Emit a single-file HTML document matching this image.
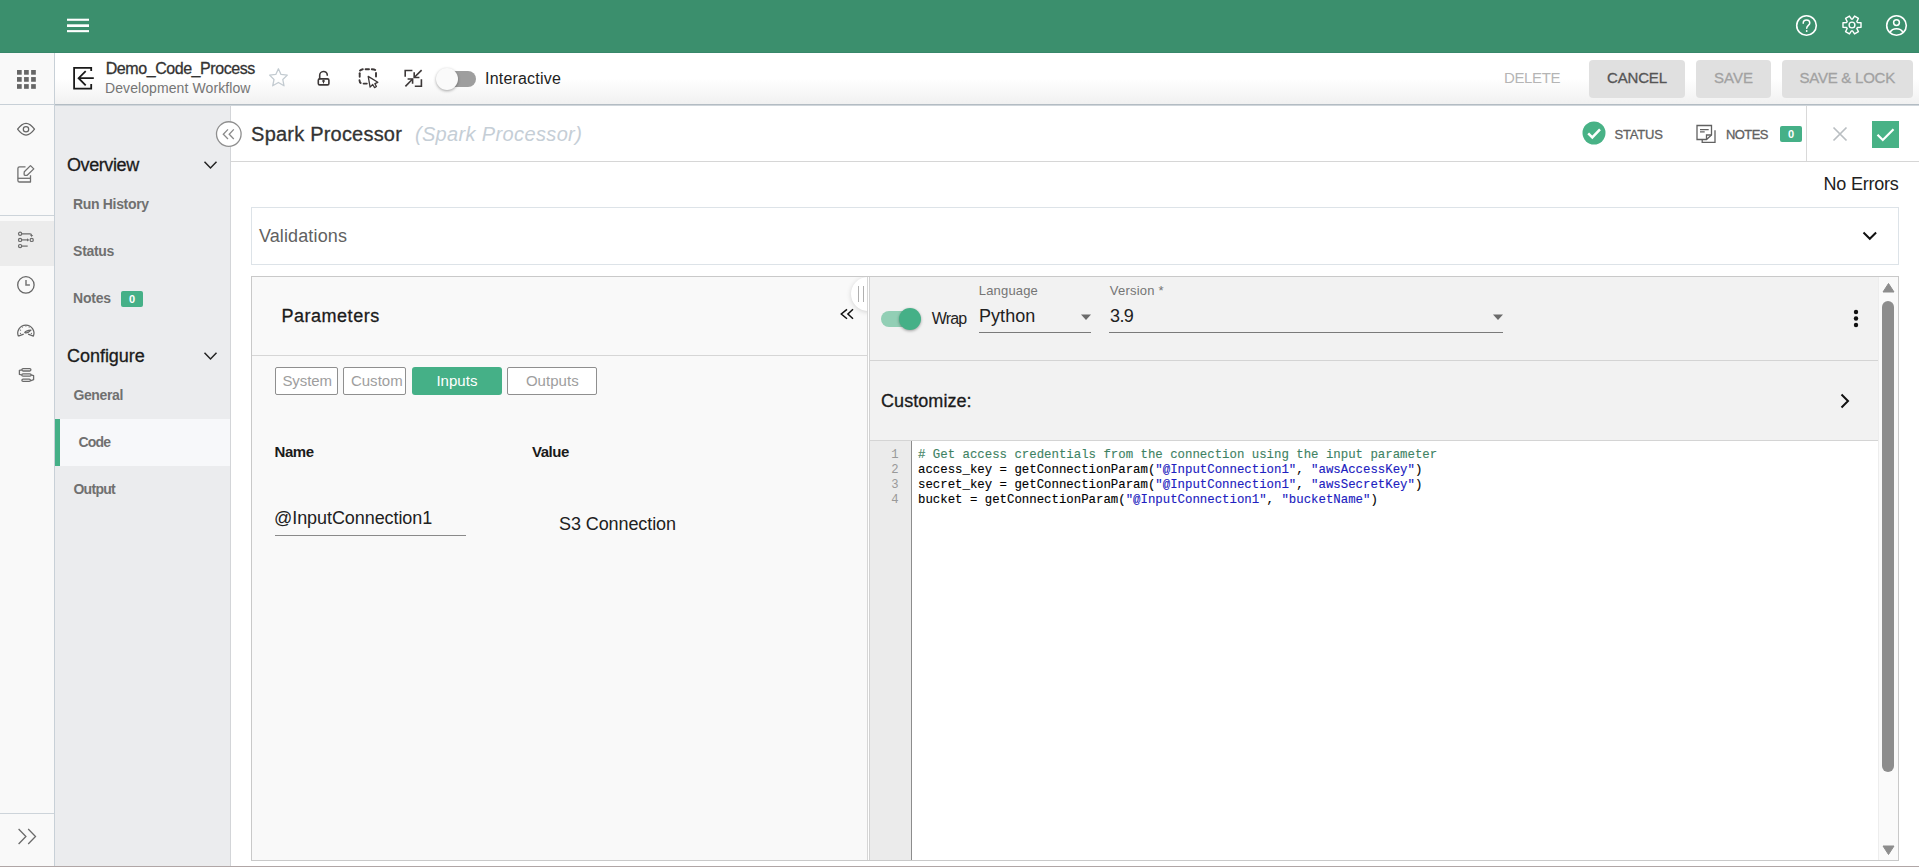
<!DOCTYPE html>
<html><head><meta charset="utf-8">
<style>
*{box-sizing:border-box;margin:0;padding:0}
html,body{width:1919px;height:867px;overflow:hidden;background:#fff;font-family:"Liberation Sans",sans-serif;color:#212121}
.abs{position:absolute}
#hdr{left:0;top:0;width:1919px;height:53px;background:#3b8f6d;border-bottom:1px solid #37876a}
#rail{left:0;top:53px;width:55px;height:814px;background:#f9f9f9;border-right:1px solid #c8d0d7}
#tb{left:55px;top:53px;width:1864px;height:52px;background:linear-gradient(#fff 0,#fff 50%,#f1f1f1 100%);border-bottom:1px solid #b3bcc3}
#tbl{left:55px;top:105px;width:1864px;height:1px;background:#d0d6db}
#side{left:55px;top:106px;width:176px;height:761px;background:#ebecee;border-right:1px solid #d3d5d8}
#main{left:231px;top:106px;width:1688px;height:761px;background:#fff}
svg{display:block}
.t{position:absolute;white-space:nowrap;line-height:1}
.m{-webkit-text-stroke:0.3px currentColor}
.cl{position:absolute;left:918px;font-family:'Liberation Mono',monospace;font-size:12.37px;line-height:15px;height:15px;color:#000;white-space:pre;transform:scaleY(1.1);transform-origin:0 72%;-webkit-text-stroke:0.12px currentColor}
</style></head><body>
<!-- header -->
<div id="hdr" class="abs">
  <svg class="abs" style="left:66px;top:16px" width="24" height="20" viewBox="0 0 24 20" fill="#fff"><rect x="1" y="2.7" width="22" height="2.1"/><rect x="1" y="8.3" width="22" height="2.7"/><rect x="1" y="14.1" width="22" height="2.1"/></svg>
  <svg class="abs" style="left:1795px;top:14px" width="23" height="23" viewBox="0 0 23 23"><circle cx="11.5" cy="11.5" r="9.8" fill="none" stroke="#fff" stroke-width="1.6"/><path d="M8.2 9.2c0-2 1.5-3.3 3.3-3.3s3.3 1.3 3.3 3.1c0 2.3-3.1 2.6-3.1 5.2" fill="none" stroke="#fff" stroke-width="1.5" stroke-linecap="round"/><circle cx="11.7" cy="17" r="0.9" fill="#fff"/></svg>
  <svg class="abs" style="left:1839.9px;top:13.4px" width="24" height="24" viewBox="0 0 24 24"><path d="M17.35 9.51L21.02 9.75L21.02 14.25L17.35 14.49L16.83 15.38L18.46 18.69L14.56 20.94L12.51 17.88L11.49 17.88L9.44 20.94L5.54 18.69L7.17 15.38L6.65 14.49L2.98 14.25L2.98 9.75L6.65 9.51L7.17 8.62L5.54 5.31L9.44 3.06L11.49 6.12L12.51 6.12L14.56 3.06L18.46 5.31L16.83 8.62Z" fill="none" stroke="#fff" stroke-width="1.4" stroke-linejoin="round"/><circle cx="12" cy="12" r="2.9" fill="none" stroke="#fff" stroke-width="1.4"/></svg>
  <svg class="abs" style="left:1885px;top:14px" width="23" height="23" viewBox="0 0 23 23"><circle cx="11.5" cy="11.5" r="9.8" fill="none" stroke="#fff" stroke-width="1.6"/><circle cx="11.5" cy="8.6" r="2.9" fill="none" stroke="#fff" stroke-width="1.5"/><path d="M4.9 18.6c1.3-2.4 3.8-3.8 6.6-3.8s5.3 1.4 6.6 3.8" fill="none" stroke="#fff" stroke-width="1.5"/></svg>
</div>
<!-- rail -->
<div id="rail" class="abs"></div>
<div class="abs" style="left:0;top:104px;width:54px;height:1px;background:#c8d0d7"></div>
<div class="abs" style="left:0;top:215px;width:54px;height:1px;background:#cdd4da"></div>
<div class="abs" style="left:0;top:221px;width:54px;height:45px;background:#ececec"></div>
<div class="abs" style="left:0;top:813px;width:54px;height:1px;background:#cdd4da"></div>
<svg class="abs" style="left:10px;top:113px" width="32" height="32" viewBox="0 0 32 32"><path d="M7.6 16.2Q16 4.4 24.5 16.2Q16 28 7.6 16.2Z" fill="none" stroke="#666" stroke-width="1.25" stroke-linejoin="round"/><circle cx="16" cy="16.2" r="2.7" fill="none" stroke="#666" stroke-width="1.25"/></svg>
<svg class="abs" style="left:10px;top:158px" width="32" height="32" viewBox="0 0 32 32"><g fill="none" stroke="#707070" stroke-width="1.3" stroke-linejoin="round"><path d="M15.5 8.9H9.6Q7.9 8.9 7.9 10.6V22.4Q7.9 24 9.6 24H20.5V17.3"/><path d="M7.9 20.3H20.5"/><path d="M20.5 7.6L23.8 10.9L17.2 17.3Q15.8 17.5 14.3 17.2Q13.9 15.6 14.3 13.8Z"/></g></svg>
<svg class="abs" style="left:10px;top:224px" width="32" height="32" viewBox="0 0 32 32"><g fill="none" stroke="#6b6b6b" stroke-width="1.2"><circle cx="10.1" cy="9.8" r="1.6"/><circle cx="10.1" cy="15.9" r="1.6"/><circle cx="10.1" cy="22.1" r="1.6"/><circle cx="21.7" cy="15.9" r="1.6"/><path d="M11.7 9.8H20Q21.5 9.8 21.5 11"/><path d="M11.7 15.9H17.5"/><path d="M11.7 22.1H17.7"/></g><path d="M20 11L23.2 11L21.6 12.9Z" fill="#6b6b6b"/><path d="M17 14.2L19.4 15.9L17 17.6Z" fill="#6b6b6b"/></svg>
<svg class="abs" style="left:10px;top:269px" width="32" height="32" viewBox="0 0 32 32"><circle cx="15.9" cy="15.9" r="8.2" fill="none" stroke="#666" stroke-width="1.3"/><path d="M16 11.1V15.9H19.9" fill="none" stroke="#777" stroke-width="1.5"/></svg>
<svg class="abs" style="left:10px;top:314px" width="32" height="32" viewBox="0 0 32 32"><g fill="none" stroke="#666" stroke-width="1.25" stroke-linejoin="round"><path d="M8.3 22.1A8.1 8.1 0 1 1 23.4 22.1L18.1 20.1M13.7 20.1L8.3 22.1"/><path d="M14.8 18.6Q15.6 16.6 21 16.2Q18.2 19.4 14.8 18.6Z"/></g><g fill="#777"><circle cx="10.5" cy="16.2" r=".65"/><circle cx="12.4" cy="13.1" r=".65"/><circle cx="15.9" cy="12" r=".65"/><circle cx="19.2" cy="13.1" r=".65"/><circle cx="10.5" cy="19.4" r=".65"/><circle cx="21.4" cy="19.4" r=".65"/></g></svg>
<svg class="abs" style="left:10px;top:359px" width="32" height="32" viewBox="0 0 32 32"><g fill="none" stroke="#6b6b6b" stroke-width="1.3" stroke-linejoin="round"><rect x="11.9" y="9.7" width="9" height="2.3" rx="1.15"/><rect x="11.8" y="14.9" width="9.3" height="2.3" rx="1.15"/><rect x="11.9" y="20.1" width="8.5" height="2.3" rx="1.15"/><path d="M11.9 10.8L9.4 11.3V15.3L11.8 16"/><path d="M21.1 15.8L23.6 16.7V20.6L20.4 21.8"/></g></svg>
<svg class="abs" style="left:10px;top:820px" width="32" height="32" viewBox="0 0 32 32"><path d="M8.6 9L15.9 16.5L8.6 24M18.2 9L25.5 16.5L18.2 24" fill="none" stroke="#6b6b6b" stroke-width="1.3"/></svg>
<!-- toolbar -->
<div id="tb" class="abs"></div>
<div id="tbl" class="abs"></div>
<svg class="abs" style="left:17px;top:70px" width="20" height="20" viewBox="0 0 20 20" fill="#666"><rect x="0.00" y="0.00" width="4.7" height="4.7"/><rect x="7.06" y="0.00" width="4.7" height="4.7"/><rect x="14.12" y="0.00" width="4.7" height="4.7"/><rect x="0.00" y="7.06" width="4.7" height="4.7"/><rect x="7.06" y="7.06" width="4.7" height="4.7"/><rect x="14.12" y="7.06" width="4.7" height="4.7"/><rect x="0.00" y="14.12" width="4.7" height="4.7"/><rect x="7.06" y="14.12" width="4.7" height="4.7"/><rect x="14.12" y="14.12" width="4.7" height="4.7"/></svg>
<svg class="abs" style="left:68px;top:62px" width="32" height="32" viewBox="0 0 32 32"><path d="M23.2 9V5.8H6.1V26.7H23.2V22.1" fill="none" stroke="#1a1a1a" stroke-width="1.8"/><path d="M25.8 16.2H10.8M17.7 9.2L10.6 16.2L17.7 23.4" fill="none" stroke="#1a1a1a" stroke-width="1.8"/></svg>
<div class="t m" style="left:105.75px;top:61.00px;font-size:16px;color:#333;letter-spacing:-0.44px">Demo_Code_Process</div>
<div class="t" style="left:105.00px;top:81.00px;font-size:14px;color:#757575;letter-spacing:0.09px">Development Workflow</div>
<svg class="abs" style="left:262px;top:62px" width="32" height="32" viewBox="0 0 32 32"><path d="M16.4 6.8L19 12.4L25.3 13.1L20.8 17.5L22 23.8L16.4 20.5L10.7 23.8L12 17.5L7.6 13.1L13.8 12.4Z" fill="none" stroke="#c3cbd1" stroke-width="1.3" stroke-linejoin="round"/></svg>
<svg class="abs" style="left:307px;top:62px" width="32" height="32" viewBox="0 0 32 32"><path d="M12.7 16.6V13.4A3.8 3.8 0 0 1 20.3 13.1" fill="none" stroke="#3d3838" stroke-width="1.6" stroke-linecap="round"/><rect x="11.3" y="16.9" width="10.6" height="6" rx="1.4" fill="none" stroke="#3d3838" stroke-width="1.6"/><circle cx="16.5" cy="19.1" r="1.25" fill="#3d3838"/><path d="M16.5 19.1V21.4" stroke="#3d3838" stroke-width="1.1"/></svg>
<svg class="abs" style="left:352px;top:62px" width="32" height="32" viewBox="0 0 32 32"><g fill="none" stroke="#3d3838" stroke-width="1.9" stroke-linecap="round"><path d="M8 8.6Q8.8 7.5 10.8 7.2"/><path d="M13.6 7.2H17"/><path d="M19.8 7.2Q22.4 7.4 23.2 8"/><path d="M7.7 11.3V14.8"/><path d="M24 10.9V14.5"/><path d="M7.5 18.3Q7.7 20.3 8.7 21"/><path d="M11.6 21.6H14.8"/></g><path d="M16.2 14.4L18.1 25.1L20.7 22.5L22.6 25.6L24.4 24.5L22.9 21.6L25.8 20.3Z" fill="#fff" stroke="#3d3838" stroke-width="1.3" stroke-linejoin="round"/></svg>
<svg class="abs" style="left:398px;top:62px" width="32" height="32" viewBox="0 0 32 32"><g fill="none" stroke="#3d3838" stroke-width="1.6"><path d="M14.4 8.5H7.2V14.8"/><path d="M23.6 8.1L16.2 15.5"/><path d="M16.2 10.3V15.5H21.4"/><path d="M7.4 24.4L14.6 17"/><path d="M9.6 17H14.6V21.8"/><path d="M23.4 17.3V24.2H16.8"/></g></svg>
<div class="abs" style="left:446px;top:71px;width:30px;height:16px;border-radius:8px;background:#9e9e9e"></div>
<div class="abs" style="left:436px;top:68px;width:22px;height:22px;border-radius:50%;background:#fafafa;box-shadow:0 1px 3px rgba(0,0,0,.35)"></div>
<div class="t" style="left:485.00px;top:71.00px;font-size:16px;color:#222;letter-spacing:0.20px">Interactive</div>
<div class="t" style="left:1504.00px;top:70.00px;font-size:15px;color:#b5b5b5;letter-spacing:-0.36px">DELETE</div>
<div class="abs" style="left:1589px;top:60px;width:96px;height:38px;border-radius:4px;background:#e0e0e0"></div>
<div class="t m" style="left:1607.00px;top:70.00px;font-size:15px;color:#555;letter-spacing:-0.16px">CANCEL</div>
<div class="abs" style="left:1696px;top:60px;width:75px;height:38px;border-radius:4px;background:#e0e0e0"></div>
<div class="t m" style="left:1714.00px;top:70.00px;font-size:15px;color:#a2a2a2;letter-spacing:0.00px">SAVE</div>
<div class="abs" style="left:1782px;top:60px;width:131px;height:38px;border-radius:4px;background:#e0e0e0"></div>
<div class="t m" style="left:1799.50px;top:70.00px;font-size:15px;color:#a2a2a2;letter-spacing:-0.24px">SAVE &amp; LOCK</div>
<!-- sidebar -->
<div id="side" class="abs"></div>
<div class="t m" style="left:67.00px;top:156.00px;font-size:18px;color:#1b1b1b;letter-spacing:-0.41px">Overview</div>
<svg class="abs" style="left:202px;top:158px" width="16" height="14" viewBox="0 0 16 14"><path d="M2.5 3.8L8.5 10L14.5 3.8" fill="none" stroke="#222" stroke-width="1.5"/></svg>
<div class="t" style="left:73.10px;top:197.00px;font-size:14px;font-weight:bold;color:#707070;letter-spacing:-0.34px">Run History</div>
<div class="t" style="left:73.10px;top:244.00px;font-size:14px;font-weight:bold;color:#707070;letter-spacing:-0.30px">Status</div>
<div class="t" style="left:73.10px;top:291.00px;font-size:14px;font-weight:bold;color:#707070;letter-spacing:-0.25px">Notes</div>
<div class="abs" style="left:121px;top:291px;width:22px;height:16px;border-radius:2px;background:#45b087;color:#fff;font-size:11px;font-weight:bold;text-align:center;line-height:16px">0</div>
<div class="t m" style="left:67.00px;top:347.00px;font-size:18px;color:#1b1b1b;letter-spacing:-0.03px">Configure</div>
<svg class="abs" style="left:202px;top:349px" width="16" height="14" viewBox="0 0 16 14"><path d="M2.5 3.8L8.5 10L14.5 3.8" fill="none" stroke="#222" stroke-width="1.5"/></svg>
<div class="t" style="left:73.40px;top:388.00px;font-size:14px;font-weight:bold;color:#707070;letter-spacing:-0.37px">General</div>
<div class="abs" style="left:55px;top:419px;width:175px;height:47px;background:#f7f8fa"></div>
<div class="abs" style="left:55px;top:419px;width:5px;height:47px;background:#45b087"></div>
<div class="t" style="left:78.50px;top:435.00px;font-size:14px;font-weight:bold;color:#707070;letter-spacing:-0.79px">Code</div>
<div class="t" style="left:73.40px;top:482.00px;font-size:14px;font-weight:bold;color:#707070;letter-spacing:-0.70px">Output</div>
<!-- main -->
<div id="main" class="abs"></div>
<!-- content header -->
<div class="abs" style="left:231px;top:161px;width:1688px;height:1px;background:#d6d6d6"></div>
<div class="abs" style="left:1806px;top:106px;width:1px;height:55px;background:#d9d9d9"></div>
<svg class="abs" style="left:215px;top:120px" width="28" height="28" viewBox="0 0 28 28"><circle cx="13.8" cy="14.05" r="12.3" fill="#fff" stroke="#8f8f8f" stroke-width="1.3"/><path d="M13 9.4L8.3 14.2L13 19M18.8 9.4L14.2 14.2L18.8 19" fill="none" stroke="#8a8a8a" stroke-width="1.3"/></svg>
<div class="t m" style="left:251.10px;top:124.00px;font-size:20px;color:#333;letter-spacing:0.21px">Spark Processor</div>
<div class="t" style="left:414.90px;top:124.00px;font-size:20px;font-style:italic;color:#c5ced6;letter-spacing:0.36px">(Spark Processor)</div>
<svg class="abs" style="left:1582px;top:121px" width="24" height="24" viewBox="0 0 24 24"><circle cx="12" cy="12" r="11.5" fill="#48b286"/><path d="M6.2 12.4L10.3 16.4L18 8.4" fill="none" stroke="#fff" stroke-width="2.5"/></svg>
<div class="t m" style="left:1614.50px;top:128.00px;font-size:13px;color:#616161;letter-spacing:-0.20px">STATUS</div>
<svg class="abs" style="left:1694px;top:123px" width="24" height="22" viewBox="0 0 24 22"><g fill="none" stroke="#616161" stroke-width="1.3"><path d="M17.5 12V2.5H3V16.5H12.5L17.5 12Z"/><path d="M12.5 16.5V12H17.5"/><path d="M6 6.6H14.7M6 8.9H10.7"/><path d="M21 7.2V19.4H8.2V17"/></g></svg>
<div class="t m" style="left:1726.00px;top:128.00px;font-size:13px;color:#616161;letter-spacing:-0.60px">NOTES</div>
<div class="abs" style="left:1780px;top:126px;width:22px;height:16px;border-radius:2px;background:#45b087;color:#fff;font-size:11px;font-weight:bold;text-align:center;line-height:16px">0</div>
<svg class="abs" style="left:1832px;top:126px" width="16" height="16" viewBox="0 0 16 16"><path d="M1.5 1.5L14.5 14.5M14.5 1.5L1.5 14.5" fill="none" stroke="#b9bec2" stroke-width="1.7"/></svg>
<div class="abs" style="left:1872px;top:121px;width:27px;height:27px;background:#48b286"></div>
<svg class="abs" style="left:1872px;top:121px" width="27" height="27" viewBox="0 0 27 27"><path d="M5.5 13.8L10.8 19L21.5 8.2" fill="none" stroke="#fff" stroke-width="2.2"/></svg>
<div class="t" style="left:1823.60px;top:175.00px;font-size:18px;color:#212121;letter-spacing:-0.22px">No Errors</div>
<!-- validations -->
<div class="abs" style="left:251px;top:207px;width:1648px;height:58px;border:1px solid #dde3e8;background:#fff"></div>
<div class="t" style="left:258.90px;top:227.00px;font-size:18px;color:#616161;letter-spacing:0.13px">Validations</div>
<svg class="abs" style="left:1860px;top:228px" width="20" height="16" viewBox="0 0 20 16"><path d="M3.5 4.5L9.8 10.8L16.1 4.5" fill="none" stroke="#111" stroke-width="2"/></svg>
<!-- panels -->
<div class="abs" style="left:251px;top:276px;width:1648px;height:585px;border:1px solid #c9c9c9;background:#fff"></div>
<div class="abs" style="left:252px;top:277px;width:616px;height:583px;background:#f9f9f9;border-right:1px solid #d2d2d2"></div>
<div class="abs" style="left:252px;top:355px;width:615px;height:1px;background:#d6d6d6"></div>
<div class="t m" style="left:281.40px;top:307.00px;font-size:18px;color:#1b1b1b;letter-spacing:0.53px">Parameters</div>
<div class="abs" style="left:275px;top:367px;width:63px;height:28px;border:1px solid #8f8f8f;border-radius:2px;background:#fff"></div>
<div class="t" style="left:282.40px;top:373.00px;font-size:15px;color:#9e9e9e;letter-spacing:-0.06px">System</div>
<div class="abs" style="left:343px;top:367px;width:63px;height:28px;border:1px solid #8f8f8f;border-radius:2px;background:#fff"></div>
<div class="t" style="left:350.90px;top:373.00px;font-size:15px;color:#9e9e9e;letter-spacing:0.02px">Custom</div>
<div class="abs" style="left:412px;top:367px;width:90px;height:28px;border-radius:3px;background:#45b087"></div>
<div class="t" style="left:436.40px;top:373.00px;font-size:15px;color:#fff;letter-spacing:0.04px">Inputs</div>
<div class="abs" style="left:507px;top:367px;width:90px;height:28px;border:1px solid #8f8f8f;border-radius:2px;background:#fff"></div>
<div class="t" style="left:525.90px;top:373.00px;font-size:15px;color:#9e9e9e;letter-spacing:0.04px">Outputs</div>
<div class="t" style="left:274.60px;top:444.00px;font-size:15px;font-weight:bold;color:#1b1b1b;letter-spacing:-0.49px">Name</div>
<div class="t" style="left:532.00px;top:444.00px;font-size:15px;font-weight:bold;color:#1b1b1b;letter-spacing:-0.45px">Value</div>
<div class="t" style="left:274.00px;top:509.00px;font-size:18px;color:#212121;letter-spacing:-0.07px">@InputConnection1</div>
<div class="abs" style="left:275px;top:535px;width:191px;height:1px;background:#8a8a8a"></div>
<div class="t" style="left:559.10px;top:515.00px;font-size:18px;color:#212121;letter-spacing:-0.10px">S3 Connection</div>
<!-- code panel -->
<div class="abs" style="left:869px;top:277px;width:1010px;height:583px;border-left:1px solid #d2d2d2;background:#fff"></div>
<div class="abs" style="left:870px;top:277px;width:1009px;height:164px;background:#f2f2f2"></div>
<div class="abs" style="left:870px;top:360px;width:1009px;height:1px;background:#d4d4d4"></div>
<div class="abs" style="left:870px;top:440px;width:1009px;height:1px;background:#d4d4d4"></div>
<div class="abs" style="left:881px;top:311px;width:36px;height:16px;border-radius:8px;background:#92cfb5"></div>
<div class="abs" style="left:899px;top:308px;width:22px;height:22px;border-radius:50%;background:#45b087;box-shadow:0 1px 3px rgba(0,0,0,.35)"></div>
<div class="t" style="left:931.70px;top:311.00px;font-size:16px;color:#222;letter-spacing:-0.80px">Wrap</div>
<div class="t" style="left:978.80px;top:284.00px;font-size:13px;color:#757575;letter-spacing:0.17px">Language</div>
<div class="t" style="left:979.00px;top:307.00px;font-size:18px;color:#212121;letter-spacing:0.04px">Python</div>
<svg class="abs" style="left:1080px;top:314px" width="12" height="7" viewBox="0 0 12 7"><path d="M1 .5H11L6 6Z" fill="#6b6b6b"/></svg>
<div class="abs" style="left:979px;top:332px;width:112px;height:1px;background:#7a7a7a"></div>
<div class="t" style="left:1109.80px;top:284.00px;font-size:13px;color:#757575;letter-spacing:0.23px">Version *</div>
<div class="t" style="left:1110.00px;top:307.00px;font-size:18px;color:#212121;letter-spacing:-0.60px">3.9</div>
<svg class="abs" style="left:1492px;top:314px" width="12" height="7" viewBox="0 0 12 7"><path d="M1 .5H11L6 6Z" fill="#6b6b6b"/></svg>
<div class="abs" style="left:1109px;top:332px;width:394px;height:1px;background:#7a7a7a"></div>
<svg class="abs" style="left:1850px;top:308px" width="12" height="22" viewBox="0 0 12 22"><circle cx="6" cy="4" r="2.2" fill="#111"/><circle cx="6" cy="10.5" r="2.2" fill="#111"/><circle cx="6" cy="17" r="2.2" fill="#111"/></svg>
<div class="t m" style="left:881.00px;top:392.00px;font-size:18px;color:#1b1b1b;letter-spacing:0.06px">Customize:</div>
<svg class="abs" style="left:1838px;top:392px" width="14" height="18" viewBox="0 0 14 18"><path d="M3.5 2.5L10 9L3.5 15.5" fill="none" stroke="#111" stroke-width="2"/></svg>
<!-- gutter -->
<div class="abs" style="left:870px;top:441px;width:42px;height:419px;background:#ebebeb;border-right:1px solid #8c8c8c"></div>
<div class="abs" style="left:870px;top:448px;width:28.5px;font-family:'Liberation Mono',monospace;font-size:12.2px;line-height:15px;color:#999;text-align:right">1<br>2<br>3<br>4</div>
<div class="cl" style="top:448px"><span style="color:#3e8263"># Get access credentials from the connection using the input parameter</span></div><div class="cl" style="top:463px">access_key = getConnectionParam(<span style="color:#2020c0">"@InputConnection1"</span>, <span style="color:#2020c0">"awsAccessKey"</span>)</div><div class="cl" style="top:478px">secret_key = getConnectionParam(<span style="color:#2020c0">"@InputConnection1"</span>, <span style="color:#2020c0">"awsSecretKey"</span>)</div><div class="cl" style="top:493px">bucket = getConnectionParam(<span style="color:#2020c0">"@InputConnection1"</span>, <span style="color:#2020c0">"bucketName"</span>)</div>
<!-- scrollbar -->
<div class="abs" style="left:1878px;top:277px;width:20px;height:583px;background:#fafafa;border-left:1px solid #ededed"></div>
<svg class="abs" style="left:1882px;top:282px" width="13" height="11" viewBox="0 0 13 11"><path d="M6.5 1.5L12 10H1Z" fill="#8d8d8d" stroke="#8d8d8d" stroke-width="1" stroke-linejoin="round"/></svg>
<div class="abs" style="left:1882px;top:301px;width:12px;height:471px;border-radius:6px;background:#8d8d8d"></div>
<svg class="abs" style="left:1882px;top:845px" width="13" height="11" viewBox="0 0 13 11"><path d="M1 1H12L6.5 9.5Z" fill="#8d8d8d" stroke="#8d8d8d" stroke-width="1" stroke-linejoin="round"/></svg>
<!-- splitter handle -->
<div class="abs" style="left:840px;top:277px;width:27px;height:44px;overflow:hidden"><div style="position:absolute;left:11px;top:0;width:34px;height:34px;border-radius:50%;background:#fff;box-shadow:0 1px 5px rgba(0,0,0,.16)"></div></div>
<div class="abs" style="left:858px;top:286px;width:1px;height:16px;background:#b0b0b0"></div>
<div class="abs" style="left:863px;top:286px;width:1px;height:16px;background:#b0b0b0"></div>
<div class="abs" style="left:867px;top:277px;width:1px;height:583px;background:#d6d6d6"></div>
<svg class="abs" style="left:836px;top:304px" width="20" height="20" viewBox="0 0 20 20"><path d="M11 5.3L5.3 10L11 14.8M17 5.3L11.9 10L17 14.8" fill="none" stroke="#111" stroke-width="1.5"/></svg>
<!-- bottom page line -->
<div class="abs" style="left:0;top:866px;width:1919px;height:1px;background:#b0a6a6"></div>
</body></html>
